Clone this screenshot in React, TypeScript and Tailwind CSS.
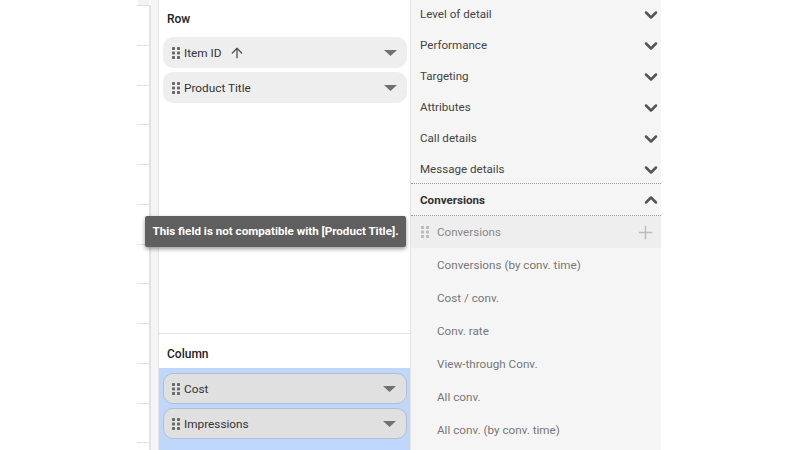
import { ArrowUp, ChevronDown, ChevronUp, Plus } from 'lucide-react';

const sections = ['Level of detail', 'Performance', 'Targeting', 'Attributes', 'Call details', 'Message details'];
const fields = ['Conversions (by conv. time)', 'Cost / conv.', 'Conv. rate', 'View-through Conv.', 'All conv.', 'All conv. (by conv. time)'];
const ticks = [5, 45, 85, 124, 164, 204, 244, 283, 323, 363, 403, 442];

function Grip({ className }: { className: string }) {
  return (
    <svg width="8" height="12" viewBox="0 0 8 12" className={className}>
      <rect x="0" y="0" width="3" height="3" rx="0.8" />
      <rect x="5" y="0" width="3" height="3" rx="0.8" />
      <rect x="0" y="4.5" width="3" height="3" rx="0.8" />
      <rect x="5" y="4.5" width="3" height="3" rx="0.8" />
      <rect x="0" y="9" width="3" height="3" rx="0.8" />
      <rect x="5" y="9" width="3" height="3" rx="0.8" />
    </svg>
  );
}

function Chip({ label, dragged, sorted }: { label: string; dragged?: boolean; sorted?: boolean }) {
  return (
    <div className={`h-[31px] rounded-[10px] flex items-center pr-[10px] ${dragged ? 'pl-[8px] bg-[#e0e0e0] border border-[#b3bfd0]' : 'pl-[9px] bg-[#eeeeee]'}`}>
      <Grip className="fill-[#666666] shrink-0" />
      <span className="ml-[4px] pt-[2px] text-[11.8px] text-[#333333]">{label}</span>
      {sorted && <ArrowUp size={16} strokeWidth={2} className="ml-[7px] text-[#555555]" />}
      <svg width="13" height="6" viewBox="0 0 13 6" className="ml-auto fill-[#707070]">
        <path d="M0 0h13L6.5 6z" />
      </svg>
    </div>
  );
}

export default function App() {
  return (
    <div className="relative w-[800px] h-[450px] overflow-hidden bg-white flex font-['Roboto','Liberation_Sans',sans-serif]">
      {/* table edge on the left, only the row ticks show */}
      <div className="w-[151px] h-full shrink-0 relative">
        <div className="absolute left-[138px] top-0 w-[11px] h-[5px] bg-[#f3f3f3]" />
        <div className="absolute left-[149px] top-[5px] bottom-0 w-[2px] bg-[#e2e2e2]" />
        {ticks.map((y) => (
          <div key={y} className="absolute left-[137px] w-[12px] h-px bg-[#e0e0e0]" style={{ top: y }} />
        ))}
      </div>

      <div className="w-[7px] bg-[#f5f5f5] shrink-0" />

      {/* row and column wells */}
      <div className="w-[253px] h-full border-x border-[#e4e4e4] flex flex-col shrink-0">
        <div className="h-[334px] border-b border-[#e4e4e4] shrink-0">
          <div className="h-[37px] pl-[8px] flex items-center text-[12px] font-medium text-[#222222]">Row</div>
          <div className="pl-[4px] pr-[3px] flex flex-col gap-[4px]">
            <Chip label="Item ID" sorted />
            <Chip label="Product Title" />
          </div>
        </div>
        <div className="h-[34px] pl-[8px] pt-[5px] flex items-center text-[12px] font-medium text-[#222222] shrink-0">Column</div>
        <div className="flex-1 bg-[#bfd7fa] pl-[4px] pr-[3px] pt-[5px] flex flex-col gap-[4px]">
          <Chip label="Cost" dragged />
          <Chip label="Impressions" dragged />
        </div>
      </div>

      {/* field picker */}
      <div className="w-[250px] h-[451px] bg-[#f5f5f5] shrink-0 -mt-px">
        {sections.map((s) => (
          <div key={s} className="h-[31px] pl-[9px] flex items-center justify-between text-[11.6px] text-[#444444]">
            <span>{s}</span>
            <ChevronDown size={20} strokeWidth={3} className="text-[#555555]" />
          </div>
        ))}
        <div className="-mt-[2px] h-[33px] pl-[9px] flex items-center justify-between text-[11.6px] font-bold text-[#333333] border-y border-dotted border-[#999999]">
          <span className="pt-[2px]">Conversions</span>
          <ChevronUp size={20} strokeWidth={3} className="text-[#555555]" />
        </div>
        <div className="h-[32px] bg-[#eeeeee] pl-[10px] pr-[5px] flex items-center text-[11.6px] text-[#888888]">
          <Grip className="fill-[#bbbbbb] shrink-0" />
          <span className="ml-[8px] pt-[2px]">Conversions</span>
          <Plus size={21} strokeWidth={1.6} className="ml-auto text-[#bbbbbb]" />
        </div>
        <div className="pl-[26px] pt-[1px]">
          {fields.map((f) => (
            <div key={f} className="h-[33px] flex items-center text-[11.7px] text-[#777777]">{f}</div>
          ))}
        </div>
      </div>

      {/* tooltip shown while dragging */}
      <div className="absolute left-[145px] top-[216px] w-[261px] h-[31px] rounded-[2px] bg-[#5f5f5f] shadow-[0_2px_4px_rgba(0,0,0,0.4)] flex items-center justify-center text-[11.6px] font-bold text-white whitespace-nowrap">
        This field is not compatible with [Product Title].
      </div>
    </div>
  );
}
